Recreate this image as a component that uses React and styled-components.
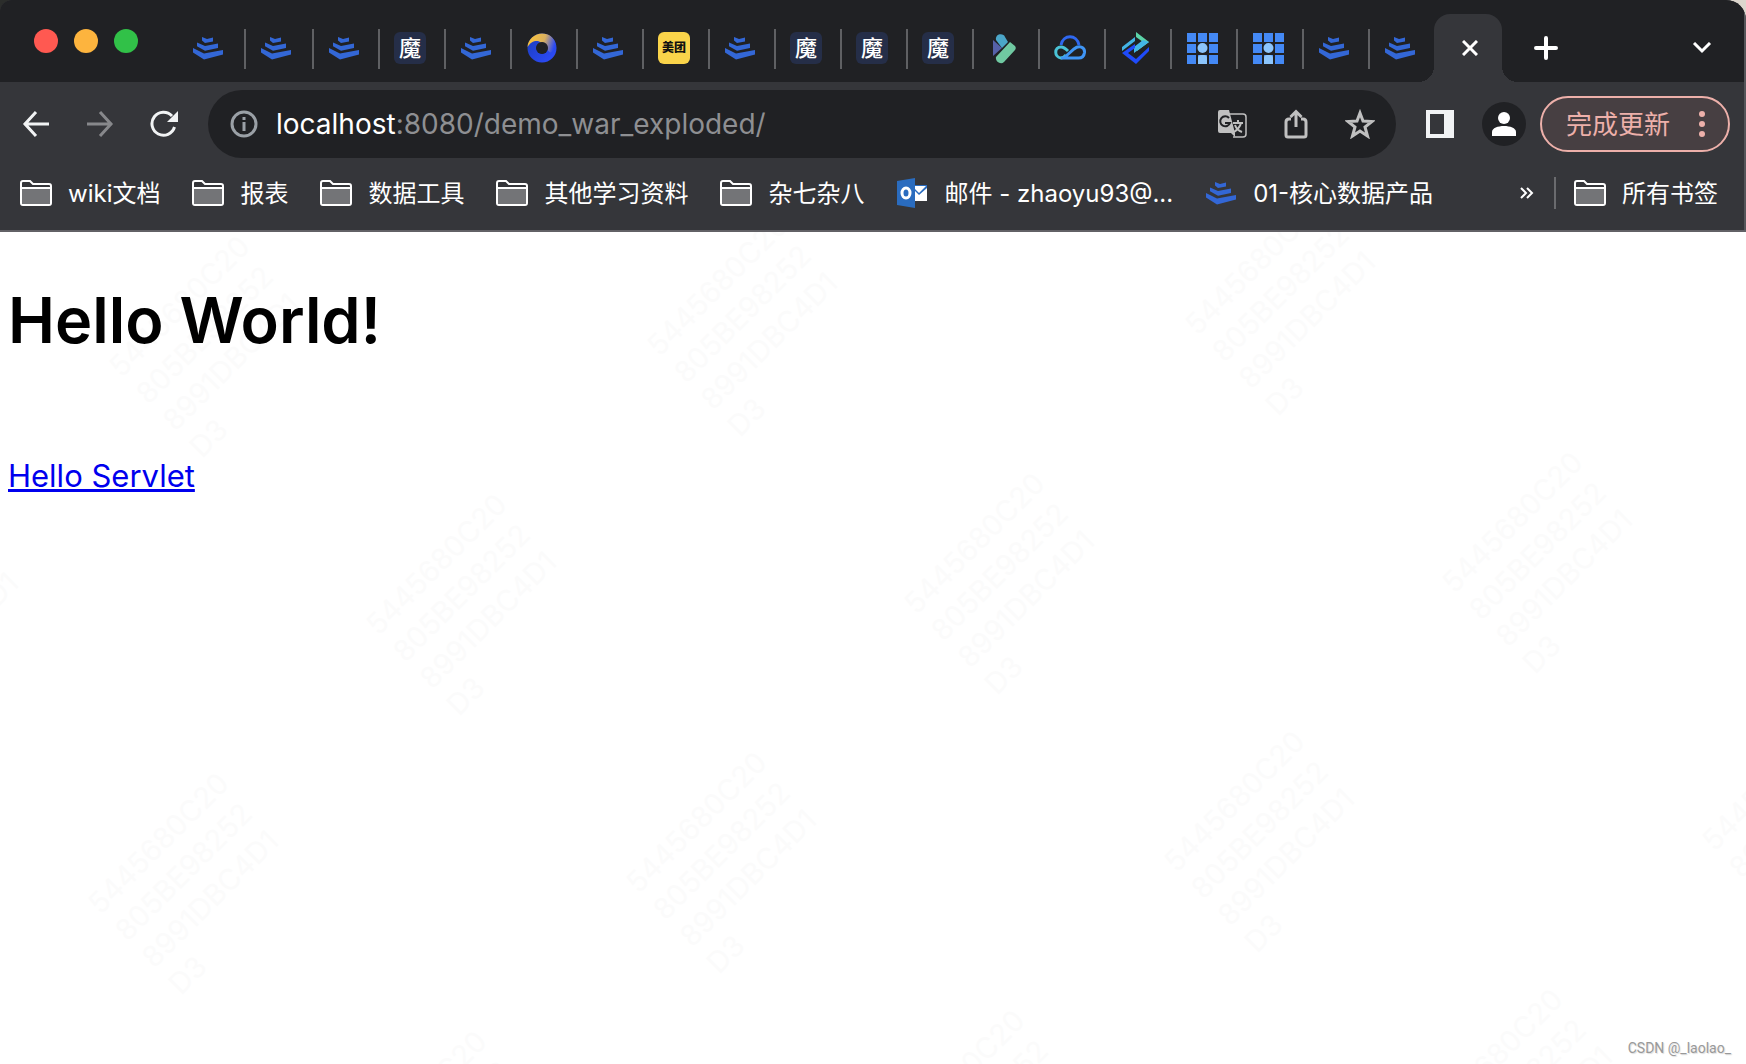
import React from "react";
import styled, { createGlobalStyle } from "styled-components";

const tabs = [
  { icon: "stack", wide: true },
  { icon: "stack", wide: true },
  { icon: "stack" },
  { icon: "magic" },
  { icon: "stack" },
  { icon: "ring" },
  { icon: "stack" },
  { icon: "meituan" },
  { icon: "stack" },
  { icon: "magic" },
  { icon: "magic" },
  { icon: "magic" },
  { icon: "play" },
  { icon: "cloud" },
  { icon: "arrows" },
  { icon: "grid" },
  { icon: "grid" },
  { icon: "stack" },
  { icon: "stack" },
];

const bookmarks = [
  { icon: "folder", label: "wiki文档" },
  { icon: "folder", label: "报表" },
  { icon: "folder", label: "数据工具" },
  { icon: "folder", label: "其他学习资料" },
  { icon: "folder", label: "杂七杂八" },
  { icon: "outlook", label: "邮件 - zhaoyu93@..." },
  { icon: "stack", label: "01-核心数据产品" },
];

//each row of stamps is shifted against the one above it
const stampRows = [
  { x: 101, y: 126, count: 3 },
  { x: -180, y: 405, count: 4 },
  { x: 80, y: 663, count: 4 },
  { x: 338, y: 921, count: 3 },
];
const stamps = stampRows.flatMap((row) =>
  Array.from({ length: row.count }, (_, i) => ({
    x: row.x + i * 538,
    y: row.y - i * 21,
  }))
);

const StackIcon = () => (
  <svg width="32" height="32" viewBox="0 0 32 32" fill="#3367d6">
    <path d="M10 5l5 2 6-1.500v4l-8 1.500-3-2.500z" />
    <path d="M5 10.500l8 3.500 13-2.500v4.500l-13 2.800-8-4.500z" />
    <path d="M1 16l11 5.500 19-3.500v4.500l-19 5-11-7z" />
  </svg>
);

const RingIcon = () => (
  <svg width="32" height="32" viewBox="0 0 32 32" fill="none">
    <defs>
      <linearGradient id="ring" x1="6" y1="6" x2="26" y2="26" gradientUnits="userSpaceOnUse">
        <stop offset="0" stopColor="#1d3fc4" />
        <stop offset="1" stopColor="#2b4af5" />
      </linearGradient>
      <linearGradient id="ringTop" x1="3" y1="10" x2="27" y2="18" gradientUnits="userSpaceOnUse">
        <stop offset="0" stopColor="#f8c23c" />
        <stop offset="0.550" stopColor="#d9b060" />
        <stop offset="1" stopColor="#2b4af5" />
      </linearGradient>
    </defs>
    <circle cx="16" cy="16" r="10" stroke="url(#ring)" strokeWidth="9" />
    <path d="M1.500 15C2 7 9 1.500 16 1.500c7 0 12 4 13.500 10 0 4-2 8-5 9 0 0-3-1-3-4.500 0-4-3-6-6.500-5.500-3-3-10-2-13.500 4.500z" fill="url(#ringTop)" />
    <circle cx="16" cy="16" r="6" fill="#202124" />
  </svg>
);

const PlayIcon = () => (
  <svg width="32" height="32" viewBox="0 0 32 32">
    <path d="M5 8v16l9-8z" fill="#5561a8" />
    <path d="M8 8c-1-7 8-7 9-3l3 5-6 6z" fill="#4ba6c8" />
    <path d="M22 10l5 4c1 1 1 3 0 4L16 30c-3 3-9 0-8-5z" fill="#70c9a2" />
  </svg>
);

const CloudIcon = () => (
  <svg width="32" height="32" viewBox="0 0 32 32" fill="none" strokeWidth="3">
    <path d="M7 13C9 2 23 2 25 13" stroke="#2f68f0" />
    <path d="M12 23c-2 2-3 3-5 3-7-1-7-11 0-11 3 0 5 2 7 4" stroke="#4ac3d6" />
    <path d="M11 25L20 17c5-4 11-2 10.500 3.500-.5 4-3 5.500-6 5.500H7" stroke="#3f95f5" />
  </svg>
);

const ArrowsIcon = () => (
  <svg width="32" height="32" viewBox="0 0 32 32" fill="none">
    <path d="M16 0l13 10-12 9v-4l6-5-7-5z" fill="#5bd3a8" />
    <path d="M2 15L15 5v4L2 19zM14 15l9-7 6 2-15 11z" fill="#43b4e5" />
    <path d="M29 15v4L16 32 2 21l13-9v4l-7 5 8 6z" fill="#1f4bfa" />
  </svg>
);

const GridIcon = () => (
  <svg width="32" height="32" viewBox="0 0 32 32" fill="#4489f5">
    {[0, 11, 22].map((x) =>
      [0, 11, 22].map((y) => (
        <rect key={`${x}-${y}`} x={x + 1} y={y + 1} width="9" height="9" />
      ))
    )}
    <path d="M12 11h9v10h-9z" fill="#202124" />
    <circle cx="16.500" cy="16" r="5" fill="#8cc5fc" />
    <path d="M12 32v-6q0-3 3-3h3q3 0 3 3v6z" fill="#8cc5fc" />
  </svg>
);

const FolderIcon = () => (
  <svg width="32" height="26" viewBox="0 0 32 26">
    <path d="M1 3q0-2 2-2h7l3 3h16q2 0 2 2v17q0 2-2 2H3q-2 0-2-2z" fill="#35363a" stroke="#fff" strokeWidth="2" />
    <path d="M2 8h28v16H2z" fill="#737477" />
    <path d="M1 8h30" stroke="#fff" strokeWidth="2" />
  </svg>
);

const OutlookIcon = () => (
  <svg width="32" height="32" viewBox="0 0 32 32">
    <path d="M1 4l18-3v30L1 28z" fill="#2a6cbf" />
    <rect x="18" y="8" width="13" height="16" fill="#2a6cbf" />
    <path d="M19 9h11l-7 7-4-4zM19 14l4 4 8-7v13H19z" fill="#fff" />
    <ellipse cx="10" cy="16" rx="4" ry="5" fill="none" stroke="#fff" strokeWidth="3" />
  </svg>
);

const icons = {
  stack: <StackIcon />,
  ring: <RingIcon />,
  play: <PlayIcon />,
  cloud: <CloudIcon />,
  arrows: <ArrowsIcon />,
  grid: <GridIcon />,
  folder: <FolderIcon />,
  outlook: <OutlookIcon />,
};

const Favicon = ({ name }) => {
  if (name === "magic") {
    return <Badge>魔</Badge>;
  }
  if (name === "meituan") {
    return <Badge $yellow>美团</Badge>;
  }
  return icons[name];
};

const TabStrip = () => (
  <Strip>
    <Lights>
      <Light aria-label="close window" $color="#ff5951" />
      <Light aria-label="minimize window" $color="#fdb43e" />
      <Light aria-label="zoom window" $color="#31c148" />
    </Lights>
    <Tabs>
      {tabs.map((tab, index) => (
        <Tab key={index} $wide={tab.wide} aria-label={`tab ${index + 1}`}>
          <Favicon name={tab.icon} />
        </Tab>
      ))}
      <ActiveTab aria-label="close tab">
        <svg width="16" height="16" viewBox="0 0 16 16" stroke="#fff" strokeWidth="3">
          <path d="M1 1l14 14M15 1L1 15" />
        </svg>
      </ActiveTab>
    </Tabs>
    <StripButton aria-label="new tab">
      <svg width="24" height="24" viewBox="0 0 24 24" stroke="#fff" strokeWidth="4" strokeLinecap="round">
        <path d="M12 2v20M2 12h20" />
      </svg>
    </StripButton>
    <StripButton $end aria-label="search tabs">
      <svg width="20" height="12" viewBox="0 0 20 12" fill="none" stroke="#fff" strokeWidth="3">
        <path d="M2 1l8 8 8-8" />
      </svg>
    </StripButton>
  </Strip>
);

const Toolbar = () => (
  <Bar>
    <NavButton aria-label="back">
      <svg width="28" height="28" viewBox="0 0 28 28" fill="none" stroke="#f1f3f4" strokeWidth="3">
        <path d="M14 2L3 14l11 12M2 14h25" />
      </svg>
    </NavButton>
    <NavButton aria-label="forward">
      <svg width="28" height="28" viewBox="0 0 28 28" fill="none" stroke="#87888b" strokeWidth="3">
        <path d="M14 2l11 12-11 12M26 14H1" />
      </svg>
    </NavButton>
    <NavButton aria-label="reload">
      <svg width="28" height="28" viewBox="0 0 28 28">
        <path d="M24.500 17A11.500 11.500 0 1 1 22 6" fill="none" stroke="#f1f3f4" strokeWidth="3" />
        <path d="M28 1v11H17z" fill="#f1f3f4" />
      </svg>
    </NavButton>
    <Omnibox>
      <svg width="28" height="28" viewBox="0 0 28 28" fill="none" stroke="#9aa0a6" strokeWidth="3">
        <circle cx="14" cy="14" r="12" />
        <path d="M14 12v9M14 7v3" />
      </svg>
      <Address href="#address">
        <b>localhost</b>:8080/demo_war_exploded/
      </Address>
      <OmniButton aria-label="translate">
        <svg width="30" height="30" viewBox="0 0 30 30">
          <path d="M12 5h14q3 0 3 3v17q0 3-3 3H16" fill="none" stroke="#c0c0c0" strokeWidth="1.500" />
          <path d="M3 1h9l6 23v4l-4-4H3q-2 0-2-2V3q0-2 2-2z" fill="#c0c0c0" />
          <path d="M12 9a5 5 0 1 0 1 5H8" fill="none" stroke="#202124" strokeWidth="2" />
          <path d="M16 14h10M21 11v3M24 14c-1 4-4 7-7 9M18 16c1 3 4 6 7 7" fill="none" stroke="#c0c0c0" strokeWidth="2" />
        </svg>
      </OmniButton>
      <OmniButton aria-label="share">
        <svg width="30" height="30" viewBox="0 0 30 30" fill="none" stroke="#c0c0c0" strokeWidth="3">
          <path d="M10 10H8q-3 0-3 3v13q0 2 2 2h16q2 0 2-2V13q0-3-3-3h-2M15 18V3M9.500 8L15 2.500 20.500 8" />
        </svg>
      </OmniButton>
      <OmniButton aria-label="bookmark this page">
        <svg width="30" height="30" viewBox="0 0 30 30" fill="none" stroke="#c0c0c0" strokeWidth="3">
          <path d="M15 4l3 8 9 .5-7 5.500 2.500 9L15 22l-7.500 5L10 18l-7-5.500 9-.5z" />
        </svg>
      </OmniButton>
    </Omnibox>
    <PanelButton aria-label="side panel">
      <svg width="28" height="28" viewBox="0 0 28 28">
        <path d="M0 0h28v28H0zM4 4v20h14V4z" fill="#f1f3f4" fillRule="evenodd" />
      </svg>
    </PanelButton>
    <Avatar aria-label="profile">
      <svg width="24" height="24" viewBox="0 0 24 24" fill="#fff">
        <circle cx="12" cy="6" r="6" />
        <path d="M0 24v-4c0-8 24-8 24 0v4z" />
      </svg>
    </Avatar>
    <UpdateButton>
      <span>完成更新</span>
      <svg width="6" height="28" viewBox="0 0 6 28" fill="#edb0aa">
        <circle cx="3" cy="4" r="3" />
        <circle cx="3" cy="14" r="3" />
        <circle cx="3" cy="24" r="3" />
      </svg>
    </UpdateButton>
  </Bar>
);

const BookmarkBar = () => (
  <Bookmarks>
    {bookmarks.map(({ icon, label }) => (
      <Bookmark key={label} href="#bookmark">
        {icons[icon]}
        <span>{label}</span>
      </Bookmark>
    ))}
    <MoreButton aria-label="more bookmarks">
      <svg width="14" height="14" viewBox="0 0 14 14" fill="none" stroke="#fff" strokeWidth="2">
        <path d="M1 2l5 5-5 5M7 2l5 5-5 5" />
      </svg>
    </MoreButton>
    <Divider />
    <Bookmark href="#all">
      <FolderIcon />
      <span>所有书签</span>
    </Bookmark>
  </Bookmarks>
);

const App = () => {
  return (
    <Window>
      <GlobalStyle />
      <Desktop>
        <Chrome>
          <TabStrip />
          <Toolbar />
          <BookmarkBar />
        </Chrome>
      </Desktop>
      <Page>
        {stamps.map(({ x, y }) => (
          <Stamp key={`${x},${y}`} aria-hidden="true" style={{ left: x, top: y }}>
            5445680C20
            <br />
            805BE98252
            <br />
            8991DBC4D1
            <br />
            D3
          </Stamp>
        ))}
        <h1>Hello World!</h1>
        <a href="#hello-servlet">Hello Servlet</a>
        <Credit>CSDN @_laolao_</Credit>
      </Page>
    </Window>
  );
};

const GlobalStyle = createGlobalStyle`
  * {
    box-sizing: border-box;
  }
  body {
    margin: 0;
    background: #fff;
    font-family: Inter, "Noto Sans CJK SC", sans-serif;
  }
  button {
    display: flex;
    align-items: center;
    justify-content: center;
    padding: 0;
    border: 0;
    background: none;
    font-family: inherit;
    cursor: pointer;
  }
  svg {
    display: block;
    flex: none;
  }
`;

const Window = styled.div`
  display: flex;
  flex-direction: column;
  min-height: 100vh;
`;

/* the wallpaper shows behind the rounded corners of the window */
const Desktop = styled.div`
  background: linear-gradient(90deg, #2b2d2b 50%, #dcd6cd 50%);
`;

const Chrome = styled.header`
  overflow: hidden;
  background: #35363a;
  border-radius: 12px 20px 0 0;
  border-bottom: 2px solid #626166;
  box-shadow: inset -2px 0 #55565a;
`;

const Strip = styled.div`
  display: flex;
  height: 82px;
  margin-right: 2px;
  padding-right: 32px;
  background: #202124;
`;

const Lights = styled.div`
  display: flex;
  gap: 16px;
  width: 178px;
  padding: 29px 0 0 34px;
`;

const Light = styled.button`
  width: 24px;
  height: 24px;
  border-radius: 50%;
  background: ${({ $color }) => $color};
`;

const Tabs = styled.nav`
  display: flex;
  align-items: flex-end;
`;

const Tab = styled.button`
  justify-content: flex-start;
  width: ${({ $wide }) => ($wide ? "68px" : "66px")};
  height: 40px;
  margin-bottom: 13px;
  padding: 0 0 2px 14px;
  border-right: 2px solid #5f6063;
  &:nth-last-child(2) {
    width: 64px;
    border-right: 0;
  }
`;

const ActiveTab = styled.button`
  position: relative;
  width: 68px;
  height: 68px;
  padding: 0 0 0 4px;
  border-radius: 16px 16px 0 0;
  background: #35363a;
  /* flared feet that join the tab to the toolbar */
  &::before,
  &::after {
    content: "";
    position: absolute;
    bottom: 0;
    width: 16px;
    height: 16px;
  }
  &::before {
    right: 100%;
    background: radial-gradient(circle at 0 0, #202124 16px, #35363a 16px);
  }
  &::after {
    left: 100%;
    background: radial-gradient(circle at 100% 0, #202124 16px, #35363a 16px);
  }
`;

const StripButton = styled.button`
  height: 68px;
  margin-top: 14px;
  margin-left: ${({ $end }) => ($end ? "auto" : "32px")};
`;

const Badge = styled.span`
  display: flex;
  align-items: center;
  justify-content: center;
  width: 32px;
  height: 32px;
  border-radius: 6px;
  background: ${({ $yellow }) => ($yellow ? "#fad44a" : "#252e48")};
  color: ${({ $yellow }) => ($yellow ? "#111" : "#fff")};
  font-size: ${({ $yellow }) => ($yellow ? "12px" : "22px")};
  font-weight: ${({ $yellow }) => ($yellow ? 900 : 500)};
  line-height: 32px;
`;

const Bar = styled.div`
  display: flex;
  align-items: center;
  padding: 8px 16px 0 4px;
`;

const NavButton = styled.button`
  width: 64px;
  height: 64px;
`;

const Omnibox = styled.div`
  display: flex;
  flex: 1;
  align-items: center;
  height: 68px;
  margin-left: 12px;
  padding: 0 18px 0 22px;
  border-radius: 34px;
  background: #202124;
`;

const Address = styled.a`
  flex: 1;
  margin-left: 18px;
  color: #8e8f92;
  font-size: 28px;
  line-height: 36px;
  text-decoration: none;
  b {
    color: #fff;
    font-weight: 400;
  }
`;

const OmniButton = styled.button`
  width: 64px;
  height: 64px;
  &:last-child {
    width: 36px;
    margin-left: 14px;
  }
`;

const PanelButton = styled.button`
  margin-left: 30px;
`;

const Avatar = styled.button`
  width: 44px;
  height: 44px;
  margin: 0 14px 0 28px;
  border-radius: 50%;
  background: #202124;
`;

const UpdateButton = styled.button`
  justify-content: space-between;
  width: 190px;
  height: 56px;
  padding: 0 23px 0 24px;
  border: 2px solid #edb0aa;
  border-radius: 28px;
  background: #473f42;
  color: #edb0aa;
  font-size: 26px;
  line-height: 36px;
  span {
    padding-top: 2px;
  }
`;

const Bookmarks = styled.nav`
  display: flex;
  align-items: center;
  gap: 32px;
  height: 72px;
  padding: 0 28px 2px 20px;
`;

const Bookmark = styled.a`
  display: flex;
  align-items: center;
  gap: 16px;
  color: #fff;
  font-size: 24px;
  line-height: 36px;
  text-decoration: none;
  white-space: nowrap;
  span {
    padding-top: 2px;
  }
`;

const MoreButton = styled.button`
  margin-left: auto;
  margin-right: -12px;
`;

const Divider = styled.div`
  width: 2px;
  height: 32px;
  margin-right: -14px;
  background: #6a6b6e;
`;

const Page = styled.main`
  position: relative;
  flex: 1;
  padding: 0 8px;
  overflow: hidden;
  isolation: isolate;
  font-size: 31px;
  line-height: 44px;
  h1 {
    margin: 44px 0 90px;
    font-size: 63px;
    font-weight: 600;
    line-height: 88px;
  }
  a {
    color: #0000ee;
    text-decoration-thickness: 3px;
  }
`;

const Stamp = styled.div`
  position: absolute;
  z-index: -1;
  transform: rotate(-45deg);
  transform-origin: 0 0;
  color: #fbfbfb;
  font-size: 29px;
  line-height: 38px;
  white-space: nowrap;
  pointer-events: none;
`;

const Credit = styled.small`
  position: absolute;
  right: 15px;
  bottom: 6px;
  color: #999;
  font-family: Roboto, sans-serif;
  font-size: 14px;
  line-height: 20px;
  text-shadow: 1px 1px 1px #ddd;
`;

export default App;
